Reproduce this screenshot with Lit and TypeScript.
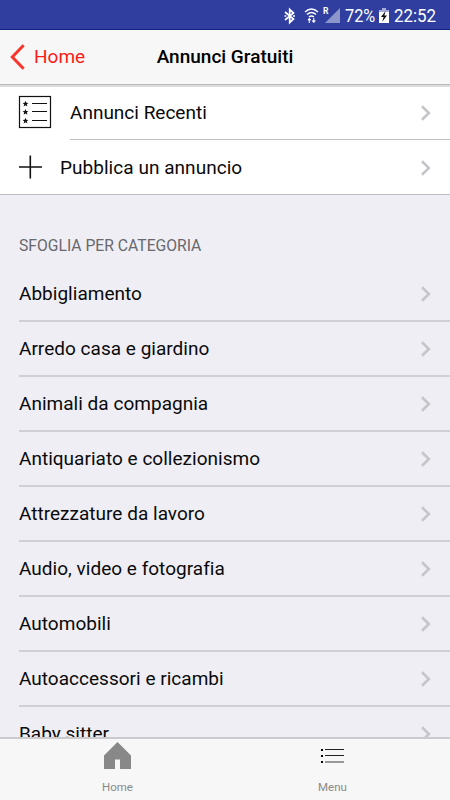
import { LitElement, html, svg, css } from "lit";
import { customElement } from "lit/decorators.js";

const categories = [
  "Abbigliamento",
  "Arredo casa e giardino",
  "Animali da compagnia",
  "Antiquariato e collezionismo",
  "Attrezzature da lavoro",
  "Audio, video e fotografia",
  "Automobili",
  "Autoaccessori e ricambi",
  "Baby sitter",
];

const chevron = html`<svg width="12" height="18" viewBox="0 0 12 18">
  <path d="M2 2.2 8.9 9 2 15.8" fill="none" stroke="#c5c5ca" stroke-width="2.6" />
</svg>`;

const star = (y: number) => svg`<path transform="translate(7.5 ${y})"
  d="M0-3 .8-.9 2.9-.8 1.3.6 1.9 2.7 0 1.5-1.9 2.7-1.3.6-2.9-.8-.8-.9Z" fill="#111" />`;

@customElement("app-root")
export class AppRoot extends LitElement {
  static styles = css`
    :host {
      display: flex;
      flex-direction: column;
      height: 800px;
      overflow: hidden;
      background: #efeef4;
      color: #0a0a0a;
      font-family: Roboto, sans-serif;
      font-size: 19px;
    }
    * { box-sizing: border-box; }
    svg { display: block; flex: none; }
    .status {
      flex: none;
      height: 30px;
      display: flex;
      align-items: center;
      background: #303f9f;
      border-bottom: 1px solid #111f80;
      color: #fff;
      padding: 2px 0 0 284px;
    }
    .wifi { margin-left: 8px; }
    .signal { margin-left: 3px; }
    .pct, .time { white-space: nowrap; transform: scaleX(0.86); transform-origin: left; }
    .pct { width: 30px; margin: 0 4px; }
    .time { margin-left: 5px; width: 44px; transform: scaleX(0.89); }
    .nav {
      flex: none;
      height: 57px;
      display: grid;
      grid-template-columns: 150px 150px 150px;
      align-items: center;
      background: #f7f7f7;
      border-bottom: 2px solid #dcdcdf;
      box-shadow: inset 0 -1px #b9b9bc;
      padding-bottom: 1px;
    }
    .back { display: flex; align-items: center; gap: 8px; padding-left: 10px; color: #fb1b17; }
    .back span, .title { padding-bottom: 1px; }
    .title { text-align: center; font-weight: 500; white-space: nowrap; color: #000; }
    .actions { flex: none; background: #fff; border-bottom: 1px solid #bdbcc0; }
    .action { display: flex; height: 54px; padding-left: 18px; align-items: center; }
    .action.first { height: 53px; }
    .first > svg { margin-top: -3px; }
    .body { height: 100%; flex: 1; display: flex; align-items: center; justify-content: space-between; margin-left: 18px; padding-right: 18px; }
    .first .body { border-bottom: 1px solid #bdbcc0; }
    .first span { padding-bottom: 2px; }
    .second .body { padding-top: 1px; }
    .second span { letter-spacing: 0.04px; }
    .heading { flex: none; height: 72px; padding: 42px 0 0 19px; font-size: 15.7px; line-height: 18px; color: #68686d; }
    .list { flex: 1; min-height: 0; overflow: hidden; padding-left: 19px; }
    .row { height: 55px; display: flex; align-items: center; justify-content: space-between; padding: 1px 18px 0 0; border-bottom: 2px solid #d0cfd5; }
    .row span { letter-spacing: 0.02px; padding-bottom: 2px; }
    .tabs { flex: none; height: 63px; display: flex; padding: 0 10px; background: #f7f7f7; border-top: 2px solid #cbcbce; color: #8a8a8a; font-size: 11.5px; }
    .tab { flex: 1; display: flex; flex-direction: column; align-items: center; }
    .icon { height: 41px; padding-top: 3px; }
    .menu { padding-top: 9px; }
  `;

  render() {
    return html`
      <div class="status">
        <svg width="12" height="18" viewBox="0 0 12 18" fill="none" stroke="#fff" stroke-width="1.7">
          <path d="M1 5 9.5 12 5.7 15.5V2.5L9.5 6 1 13" />
          <path d="M0.5 9h1.8M9 9h2" />
        </svg>
        <svg class="wifi" width="16" height="18" viewBox="0 0 16 18" fill="none" stroke="#fff" stroke-width="1.4">
          <path d="M1 5Q7.5-1 14 5M3 7.5Q7.5 3.4 12 7.5M5 10Q7.5 8 10 10" />
          <path d="M4 13 5.3 11.2 6.6 13ZM8.4 13.8h2.8l-1.4 1.8ZM5.3 12v4M9.8 11v4" stroke-width="1" fill="#fff" />
        </svg>
        <svg class="signal" width="18" height="18" viewBox="0 0 18 18">
          <path d="M17 1V16H2Z" fill="#8d96ca" />
          <text x="0" y="7" font-size="8.5" font-weight="700" fill="#fff" stroke="#303f9f" stroke-width="1.5" paint-order="stroke">R</text>
        </svg>
        <span class="pct">72%</span>
        <svg width="10" height="18" viewBox="0 0 10 18">
          <path d="M3 1h4v2h3v4H0V3h3Z" fill="#a5acd6" /><path d="M0 5h10v11H0Z" fill="#fff" />
          <path d="M6.6 4 2 10h2.6L3.3 14.7 8 8.4H5.4Z" fill="#111" />
        </svg>
        <span class="time">22:52</span>
      </div>
      <div class="nav">
        <div class="back">
          <svg width="16" height="26" viewBox="0 0 16 26"><path d="M13.6 1.3 2.3 13 13.6 24.7" fill="none" stroke="#f8352b" stroke-width="3" /></svg>
          <span>Home</span>
        </div>
        <div class="title">Annunci Gratuiti</div>
      </div>
      <div class="actions">
        <div class="action first">
          <svg width="34" height="34" viewBox="0 0 34 34">
            <rect x="1.5" y="1.5" width="31" height="31" fill="none" stroke="#111" stroke-width="1.2" />
            <path d="M14 8.5h15M14 16.5h15M14 25.5h15" stroke="#111" stroke-width="1.2" />
            ${[8.7, 17, 25.7].map(star)}
          </svg>
          <div class="body"><span>Annunci Recenti</span>${chevron}</div>
        </div>
        <div class="action second">
          <svg width="24" height="24" viewBox="0 0 24 24"><path d="M12.3 0.5v23M1 12h23" fill="none" stroke="#111" stroke-width="1.6" /></svg>
          <div class="body"><span>Pubblica un annuncio</span>${chevron}</div>
        </div>
      </div>
      <div class="heading">SFOGLIA PER CATEGORIA</div>
      <div class="list">
        ${categories.map((name) => html`<div class="row"><span>${name}</span>${chevron}</div>`)}
      </div>
      <div class="tabs">
        <div class="tab">
          <div class="icon"><svg width="28" height="28" viewBox="0 0 28 28"><path d="M13.5 0 27 13.5V27H16V17.5H11V27H0V13.5Z" fill="#888" /></svg></div>
          <span>Home</span>
        </div>
        <div class="tab">
          <div class="icon menu"><svg width="26" height="18" viewBox="0 0 26 18">
            <path d="M1 1h2v2H1ZM1 7h2v2H1ZM1 13h2v2H1Z" /><path d="M5 1h19v1H5ZM5 7h19v1H5Z" fill="#222" /><path d="M5 13h19v2H5Z" fill="#999" />
          </svg></div>
          <span>Menu</span>
        </div>
      </div>
    `;
  }
}
